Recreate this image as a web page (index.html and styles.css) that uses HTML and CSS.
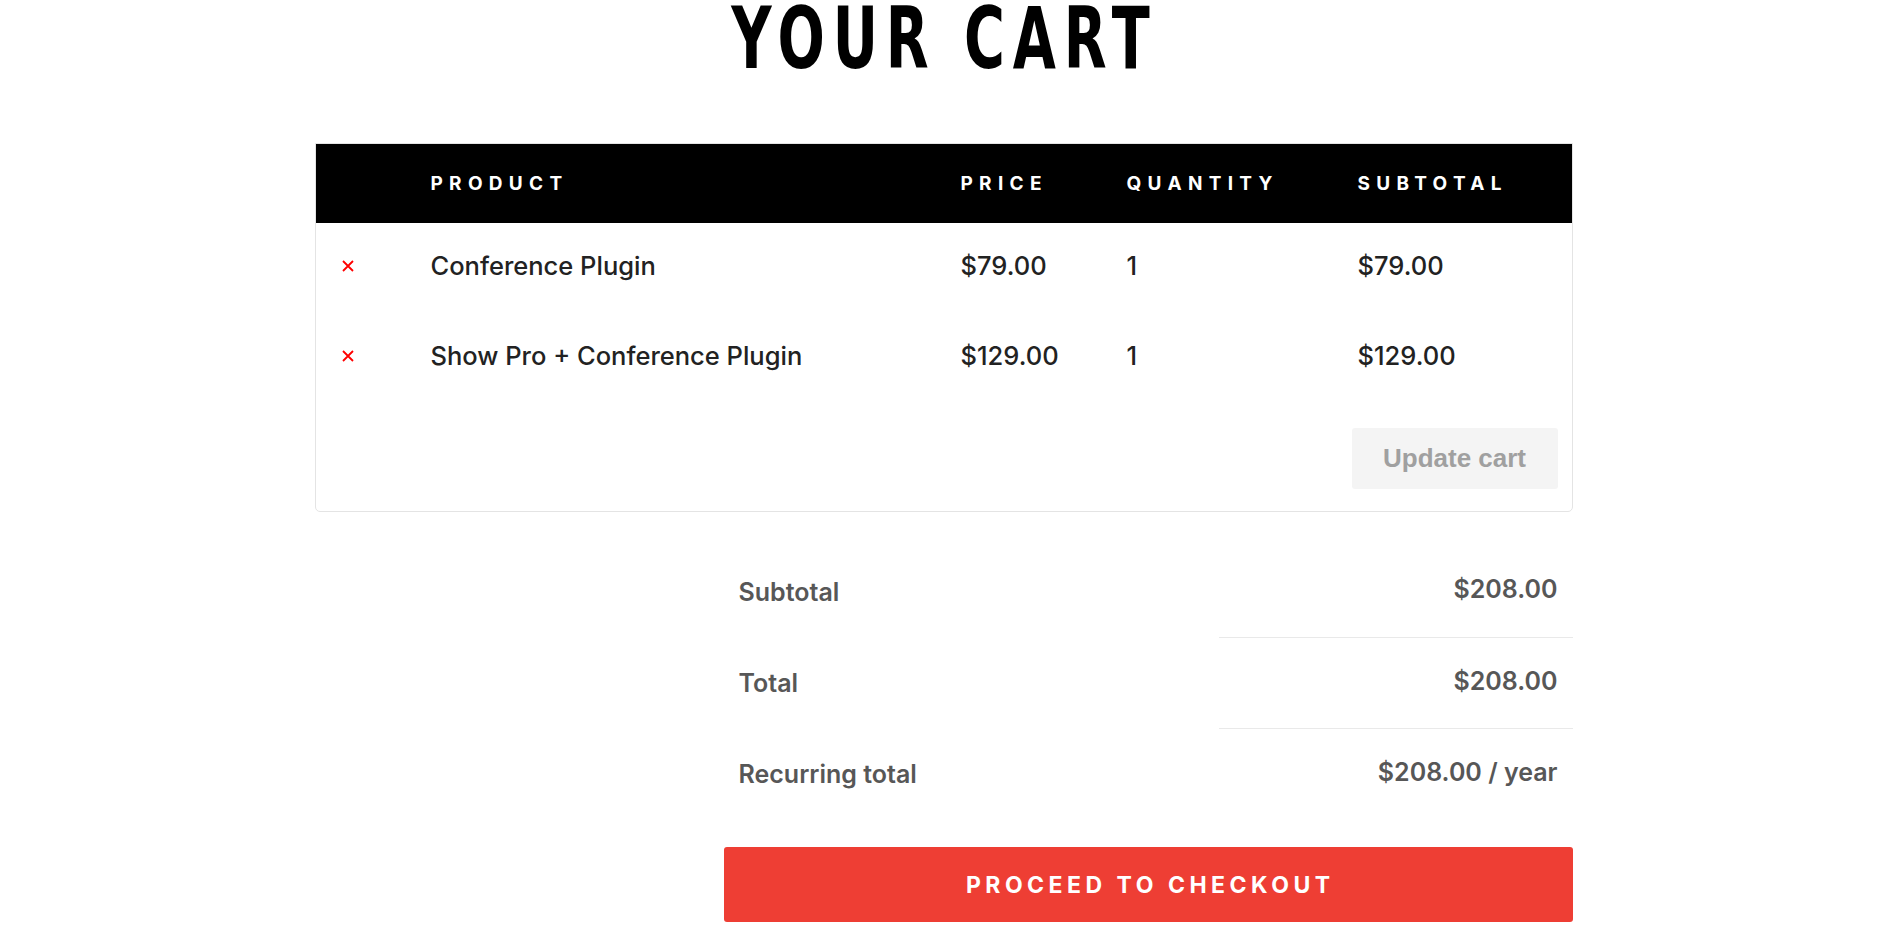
FILE: index.html
```html
<!DOCTYPE html>
<html lang="en">
<head>
<meta charset="utf-8">
<title>Your Cart</title>
<link rel="stylesheet" href="styles.css">
</head>
<body>
<main class="cart">
  <h1 class="title"><span class="title-text">YOUR CART</span></h1>

  <section class="cart-box">
    <div class="cart-row cart-head">
      <div></div>
      <div>PRODUCT</div>
      <div>PRICE</div>
      <div>QUANTITY</div>
      <div>SUBTOTAL</div>
    </div>
    <div class="cart-row cart-item">
      <div class="remove"><svg viewBox="0 0 12 12" width="12" height="12" aria-hidden="true"><path d="M1 1 L11 11 M11 1 L1 11" stroke="#f00" stroke-width="1.8" fill="none"/></svg></div>
      <div>Conference Plugin</div>
      <div class="num">$79.00</div>
      <div class="num">1</div>
      <div class="num">$79.00</div>
    </div>
    <div class="cart-row cart-item">
      <div class="remove"><svg viewBox="0 0 12 12" width="12" height="12" aria-hidden="true"><path d="M1 1 L11 11 M11 1 L1 11" stroke="#f00" stroke-width="1.8" fill="none"/></svg></div>
      <div>Show Pro + Conference Plugin</div>
      <div class="num">$129.00</div>
      <div class="num">1</div>
      <div class="num">$129.00</div>
    </div>
    <div class="cart-actions">
      <button class="update-btn" type="button">Update cart</button>
    </div>
  </section>

  <section class="totals">
    <div class="t-row">
      <div class="t-label">Subtotal</div>
      <div class="t-value">$208.00</div>
    </div>
    <div class="t-row">
      <div class="t-label">Total</div>
      <div class="t-value">$208.00</div>
    </div>
    <div class="t-row">
      <div class="t-label">Recurring total</div>
      <div class="t-value">$208.00 / year</div>
    </div>
    <a class="checkout" href="#">PROCEED TO CHECKOUT</a>
  </section>
</main>
</body>
</html>
```

FILE: styles.css
```css
* { box-sizing: border-box; }

html, body {
  margin: 0;
  padding: 0;
  background: #fff;
}

body {
  font-family: Inter, "Noto Sans", Arial, sans-serif;
  color: #222;
}

.cart {
  width: 1258px;
  margin-left: calc(50% - 627px);
  display: flex;
  flex-direction: column;
}

.title {
  margin: 0 6px 0 0;
  height: 143px;
  text-align: center;
  font-family: "DejaVu Sans Condensed", "DejaVu Sans", sans-serif;
  font-stretch: condensed;
  font-weight: 700;
  font-size: 86px;
  line-height: 76px;
  color: #000;
}

.title-text {
  display: inline-block;
  letter-spacing: 11px;
  padding-left: 11px;
  transform: scaleX(0.72);
  transform-origin: center top;
}

.cart-box {
  border: 1px solid #e4e4e4;
  border-radius: 0 0 5px 5px;
  overflow: hidden;
}

.cart-row {
  display: grid;
  grid-template-columns: 115px 530px 166px 231px 1fr;
  align-items: center;
}

.cart-head {
  height: 79px;
  background: #000;
  color: #fff;
  font-weight: 700;
  font-size: 19px;
  letter-spacing: 6.3px;
}

.cart-item {
  height: 90px;
  padding-bottom: 5px;
  font-size: 25.5px;
  font-weight: 500;
  color: #222;
}

.remove {
  padding-left: 26px;
  display: flex;
  align-items: center;
}

.remove svg { display: block; }

.cart-actions {
  display: flex;
  justify-content: flex-end;
  padding: 25px 14px 22px 0;
}

.update-btn {
  width: 206px;
  height: 61px;
  border: 0;
  border-radius: 3px;
  background: #f4f4f4;
  color: #a0a0a0;
  font-family: "Liberation Sans", Arial, sans-serif;
  font-weight: 700;
  font-size: 26px;
  padding: 0;
}

.totals {
  align-self: flex-end;
  width: 849px;
  margin-top: 34px;
  display: flex;
  flex-direction: column;
}

.t-row {
  display: grid;
  grid-template-columns: 495px 1fr;
  height: 91px;
  color: #575757;
  font-size: 25px;
  font-weight: 600;
}

.t-row + .t-row .t-value {
  border-top: 1px solid #e9e9e9;
}

.t-label {
  padding-left: 15px;
  display: flex;
  align-items: center;
}

.t-value {
  padding-right: 15px;
  display: flex;
  align-items: center;
  justify-content: flex-end;
  padding-bottom: 5px;
}

.checkout {
  margin-top: 28px;
  height: 75px;
  border-radius: 3px;
  background: #ee3e34;
  color: #fff;
  text-decoration: none;
  font-weight: 700;
  font-size: 23px;
  letter-spacing: 4.5px;
  padding-left: 4.5px;
  display: flex;
  align-items: center;
  justify-content: center;
}
```
